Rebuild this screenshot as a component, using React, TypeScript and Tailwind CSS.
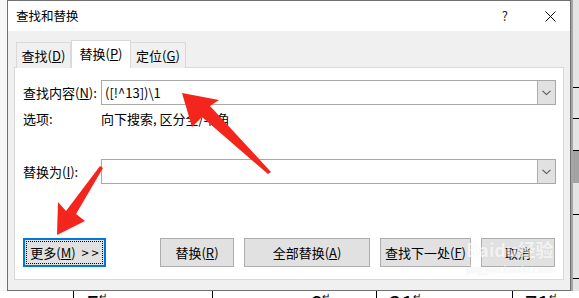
import React from 'react';

const font = "font-['Noto_Sans_CJK_SC','Noto_Sans',sans-serif]";

const Chevron = () => (
  <svg width="9" height="6" viewBox="0 0 9 6">
    <path d="M0.5 0.8 L4.5 4.6 L8.5 0.8" fill="none" stroke="#555" strokeWidth="1.1" />
  </svg>
);

const ComboBox = ({ value }: { value?: string }) => (
  <div className="flex h-[25px] w-[455px] border border-[#a8a8a8] bg-white">
    <div className="flex flex-1 items-center pl-[3px] text-[13px] text-black">{value}</div>
    <div className="flex w-[18px] items-center justify-center border-l border-[#adadad] bg-[#e1e1e1]">
      <Chevron />
    </div>
  </div>
);

const Btn = ({ label, w }: { label: React.ReactNode; w: string }) => (
  <div className={`flex h-[29px] items-center justify-center border border-[#adadad] bg-[#e1e1e1] text-[13px] text-black ${w}`}>
    {label}
  </div>
);

const Arrows = () => (
  <svg className="absolute left-0 top-0" width="579" height="298" viewBox="0 0 579 298">
    <polygon
      points="182,93 219,100 210,106 271,172 268,174 202,117 192,127"
      fill="#f4251c"
    />
    <polygon
      points="57,235 58,202 66,211 100,166 103,168 76,214 85,221"
      fill="#f4251c"
    />
  </svg>
);

export default function App() {
  return (
    <div className={`relative h-[298px] w-[579px] overflow-hidden bg-white ${font}`}>
      <div className="flex h-[291px]">
        {/* left strip of the page behind */}
        <div className="w-[7px] bg-[#f7f7f7]" />

        {/* dialog */}
        <div className="flex w-[564px] flex-col border border-[#707070] bg-[#f0f0f0]">
          {/* title bar */}
          <div className="flex h-[30px] items-center bg-white pl-[8px] pr-[14px]">
            <span className="flex-1 text-[12.5px] text-black">查找和替换</span>
            <span className="mr-[37px] text-[13px] text-[#222]">?</span>
            <svg width="11" height="11" viewBox="0 0 11 11">
              <path d="M0.5 0.5 L10.5 10.5 M10.5 0.5 L0.5 10.5" stroke="#111" strokeWidth="1" />
            </svg>
          </div>

          <div className="flex flex-1 flex-col pl-[6px] pr-[6px] pt-[9px]">
            {/* tabs */}
            <div className="relative z-10 ml-[2px] flex h-[28px] items-end text-[13px] text-black">
              <div className="flex h-[26px] w-[55px] items-center justify-center border border-b-0 border-[#d9d9d9] bg-[#f0f0f0]">
                查找(<u>D</u>)
              </div>
              <div className="flex h-[28px] w-[60px] items-center justify-center border border-b-0 border-[#d9d9d9] bg-white pb-[1px]">
                替换(<u>P</u>)
              </div>
              <div className="flex h-[26px] w-[55px] items-center justify-center border border-b-0 border-l-0 border-[#d9d9d9] bg-[#f0f0f0]">
                定位(<u>G</u>)
              </div>
            </div>

            {/* tab panel */}
            <div className="-mt-[1px] flex h-[213px] flex-col border border-[#d9d9d9] bg-white pl-[8px] pt-[12px] text-[13px] text-black">
              <div className="flex items-center">
                <span className="w-[78px]">查找内容(<u>N</u>):</span>
                <ComboBox value="([!^13])\1" />
              </div>
              <div className="mt-[5px] flex h-[18px] items-center">
                <span className="w-[78px]">选项:</span>
                <span>向下搜索, 区分全/半角</span>
              </div>
              <div className="mt-[31px] flex items-center">
                <span className="w-[78px]">替换为(<u>I</u>):</span>
                <ComboBox />
              </div>
              <div className="mt-[54px] flex items-center">
                <div className="flex h-[29px] w-[83px] items-center border-2 border-[#0078d7] bg-[#e1e1e1] p-[1px]">
                  <div className="flex h-full w-full items-center justify-center border border-dotted border-black text-[13px]">
                    更多(<u>M</u>)&nbsp;&nbsp;&gt; &gt;
                  </div>
                </div>
                <div className="ml-[54px] flex gap-[10px]">
                  <Btn w="w-[74px]" label={<>替换(<u>R</u>)</>} />
                  <Btn w="w-[126px]" label={<>全部替换(<u>A</u>)</>} />
                  <Btn w="w-[91px]" label={<>查找下一处(<u>F</u>)</>} />
                  <Btn w="w-[74px]" label="取消" />
                </div>
              </div>
            </div>
          </div>
          <div className="h-[10px]" />
        </div>

        {/* right strip of the page behind */}
        <div className="flex flex-1 flex-col border-l-2 border-[#a5a5a5] bg-[#e4e4e4]">
          <div className="h-[87px]" />
          <div className="h-[31px] border-t border-black" />
          <div className="h-[32px] border-t border-black" />
          <div className="h-[33px] border-t border-black bg-[#a3a3a3]" />
          <div className="h-[31px] bg-[#e4e4e4]" />
          <div className="h-[64px] border-t border-black" />
          <div className="flex-1 border-t border-black" />
        </div>
      </div>

      {/* table of the page behind */}
      <div className="relative flex h-[7px] text-[22px] leading-none text-black">
        <div className="w-[73px]" />
        <div className="flex w-[139px] border-l border-black pl-[12px]">E<span className="text-[10px]">↵</span></div>
        <div className="flex w-[164px] justify-end border-l border-black pr-[46px]">6<span className="text-[10px]">↵</span></div>
        <div className="flex w-[136px] border-l border-black pl-[12px]">31<span className="text-[10px]">↵</span></div>
        <div className="flex flex-1 border-l border-black pl-[12px]">71<span className="text-[10px]">↵</span></div>
      </div>

      {/* baidu watermark */}
      <div className="absolute left-[466px] top-[240px] flex flex-col items-center text-white opacity-60 [text-shadow:0_0_1px_#c8c8c8]">
        <span className="text-[18px] font-bold leading-none">Baidu经验</span>
        <span className="mt-[6px] text-[10px] leading-none">jingyan.baidu.com</span>
      </div>

      <Arrows />
    </div>
  );
}
